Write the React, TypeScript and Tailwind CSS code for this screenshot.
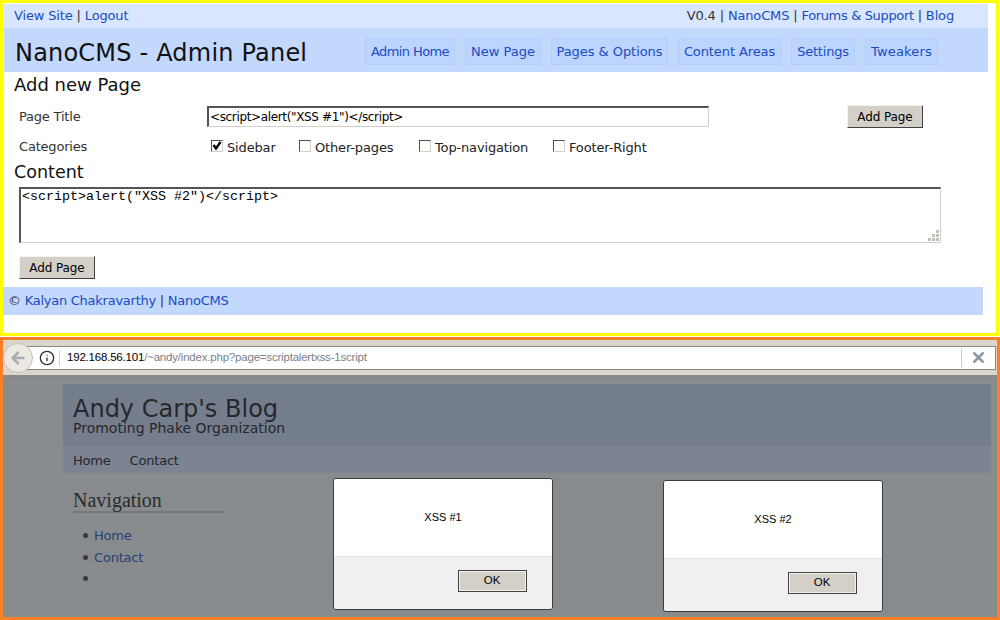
import { X, ArrowLeft, Info } from "lucide-react";

const verdana = "font-['DejaVu_Sans',sans-serif]";
const link = "text-[#1a4cc0]";

const NavItem = ({ label, className }: { label: string; className: string }) => (
	<a className={`flex h-[27px] items-center justify-center border border-[#b0cdff] bg-[#bcd4fe] pt-[1px] text-[13px] text-[#1a4cc0] ${className}`}>
		{label}
	</a>
);

const Classic = ({ className }: { className: string }) => (
	<button
		className={`flex items-center justify-center border border-t-[#f4f2ee] border-l-[#f4f2ee] border-r-[#404040] border-b-[#404040] bg-[#d4d0c8] text-[12px] tracking-[-0.1px] text-black ${className}`}
	>
		Add Page
	</button>
);

const Check = ({ label, checked, className }: { label: string; checked?: boolean; className: string }) => (
	<div className={`flex items-center gap-[4px] ${className}`}>
		<span className="-mt-[2px] flex h-[12px] w-[12px] items-center justify-center border border-t-[#505050] border-l-[#505050] border-r-[#d4d0c8] border-b-[#d4d0c8] bg-white">
			{checked && (
				<svg viewBox="0 0 10 10" className="h-[10px] w-[10px]">
					<path d="M1.5 4 L4 7.5 L8.5 1" fill="none" stroke="#000" strokeWidth="2.4" />
				</svg>
			)}
		</span>
		<span className="pt-[2px] text-[13px] tracking-[-0.15px] text-[#222]">{label}</span>
	</div>
);

const Alert = ({ text, className }: { text: string; className: string }) => (
	<div className={`absolute flex h-[132px] w-[220px] flex-col overflow-hidden rounded-[3px] border border-[#3c3c3c] ${className}`}>
		<div className="flex h-[78px] items-center justify-center border-b border-[#e4e4e4] bg-white font-['Liberation_Sans',sans-serif] text-[11px] text-black">
			{text}
		</div>
		<div className="flex flex-1 items-start justify-end bg-[#f0f0f0] pt-[13px] pr-[25px]">
			<button className="flex h-[22px] w-[69px] items-center justify-center border border-[#404040] border-r-[2px] border-b-[2px] bg-[#d4d0c8] font-['Liberation_Sans',sans-serif] text-[11.5px] text-black outline outline-1 -outline-offset-2 outline-[#f4f2ee]">
				OK
			</button>
		</div>
	</div>
);

const Bullet = ({ children }: { children?: string }) => (
	<li className="flex h-[21.5px] items-center gap-[6px]">
		<span className="h-[5px] w-[5px] rounded-full bg-[#3a3a3a]" />
		<span className="text-[#2b4078]">{children}</span>
	</li>
);

export default function App() {
	return (
		<div className={`flex h-[620px] w-[1000px] flex-col bg-white ${verdana}`}>
			<section className="h-[336px] w-[999px] border-[3px] border-[#ffff00] bg-white pt-[1px]">
				<div className="ml-[1px] flex h-[24px] w-[984px] items-center justify-between bg-[#d8e6ff] pr-[34px] pl-[10px] text-[13px] tracking-[-0.15px] text-[#333]">
					<div>
						<a className={link}>View Site</a> | <a className={link}>Logout</a>
					</div>
					<div>
						V0.4 | <a className={link}>NanoCMS</a> | <a className={`${link} tracking-[-0.35px]`}>Forums &amp; Support</a> |{" "}
						<a className={link}>Blog</a>
					</div>
				</div>
				<div className="ml-[1px] flex h-[44px] w-[984px] items-center bg-[#c3d8fd] pt-[3px] pl-[11px]">
					<h1 className="w-[350px] pt-[2px] text-[24px] tracking-[0.2px] text-[#111]">NanoCMS - Admin Panel</h1>
					<nav className="flex gap-[10px]">
						<NavItem label="Admin Home" className="w-[90px] tracking-[-0.6px]" />
						<NavItem label="New Page" className="w-[76px] tracking-[0px]" />
						<NavItem label="Pages & Options" className="w-[117px] tracking-[-0.05px]" />
						<NavItem label="Content Areas" className="w-[103px] tracking-[-0.1px]" />
						<NavItem label="Settings" className="w-[64px] tracking-[-0.2px]" />
						<NavItem label="Tweakers" className="w-[73px] tracking-[0.15px]" />
					</nav>
				</div>
				<h2 className="ml-[11px] h-[28px] pt-[1px] text-[18px] leading-[24px] text-[#111]">Add new Page</h2>
				<div className="flex h-[33px] items-center text-[13px] tracking-[-0.2px] text-[#333]">
					<span className="ml-[16px] w-[188px]">Page Title</span>
					<input
						readOnly
						value={'<script>alert("XSS #1")</script>'}
						className="h-[21px] w-[502px] border border-t-[2px] border-l-[2px] border-t-[#555] border-l-[#555] border-r-[#d4d0c8] border-b-[#d4d0c8] bg-white px-[1px] text-[12px] tracking-[-0.35px] text-black"
					/>
					<Classic className="ml-[138px] h-[23px] w-[76px]" />
				</div>
				<div className="flex h-[27px] items-center text-[13px] tracking-[-0.2px] text-[#333]">
					<span className="ml-[16px] w-[192px]">Categories</span>
					<Check label="Sidebar" checked className="w-[88px]" />
					<Check label="Other-pages" className="w-[120px]" />
					<Check label="Top-navigation" className="w-[134px]" />
					<Check label="Footer-Right" className="w-[110px]" />
				</div>
				<h2 className="ml-[11px] h-[27px] text-[17.5px] leading-[24px] text-[#111]">Content</h2>
				<div className="relative ml-[16px] h-[56px] w-[922px]">
					<textarea
						readOnly
						value={'<script>alert("XSS #2")</script>'}
						className="block h-full w-full resize-none border border-t-[2px] border-l-[2px] border-t-[#555] border-l-[#555] border-r-[#d4d0c8] border-b-[#d4d0c8] bg-white px-[1px] pt-[1px] font-['Liberation_Mono',monospace] text-[13.33px] leading-[14px] text-black"
					/>
					<svg viewBox="0 0 11 11" className="absolute right-[2px] bottom-[2px] h-[11px] w-[11px]">
						<path d="M8 0h3v3H8zM4 4h3v3H4zM8 4h3v3H8zM0 8h3v3H0zM4 8h3v3H4zM8 8h3v3H8z" fill="#c4c1ba" />
					</svg>
				</div>
				<Classic className="mt-[13px] ml-[16px] h-[23px] w-[76px]" />
				<div className="mt-[8px] h-[28px] w-[980px] bg-[#c3d8fd] pl-[5px] text-[13px] leading-[28px] tracking-[-0.25px] text-[#333]">
					© <a className={link}>Kalyan Chakravarthy</a> | <a className={link}>NanoCMS</a>
				</div>
			</section>
			<section className="relative mt-[1px] flex flex-1 flex-col border-[3px] border-[#ff7f27] bg-[#8b8e90]">
				<div className="flex h-[37px] items-center border-b-[2px] border-[#8a8880] bg-[#dad6ce] pr-[1px]">
					<div className="z-10 -mr-[16px] flex h-[30px] w-[30px] shrink-0 items-center justify-center rounded-full border border-[#c4c2bc] bg-[#ece9e3]">
						<ArrowLeft size={18} strokeWidth={3.5} className="text-[#a9adb2]" />
					</div>
					<div className="flex h-[24px] flex-1 items-center border border-[#888] bg-white pl-[21px] font-['Liberation_Sans',sans-serif] text-[11.5px] tracking-[-0.2px]">
						<Info size={16} className="mr-[4px] shrink-0 text-[#333]" />
						<span className="mr-[7px] h-[16px] w-px bg-[#d4d0c8]" />
						<span className="text-black">192.168.56.101</span>
						<span className="text-[#7a7f88]">/~andy/index.php?page=scriptalertxss-1script</span>
						<span className="mr-[8px] ml-auto h-[20px] w-px bg-[#d4d0c8]" />
						<X size={17} strokeWidth={3.5} className="mr-[8px] text-[#8a98a8]" />
					</div>
				</div>
				<div className="ml-[60px] flex w-[928px] flex-col">
					<div className="mt-[7px] h-[62px] bg-[#77808f] pt-[13px] pl-[10px] text-[#26282c]">
						<div className="text-[24px] leading-[24px]">Andy Carp's Blog</div>
						<div className="text-[14px] leading-[14px]">Promoting Phake Organization</div>
					</div>
					<div className="flex h-[27px] items-center gap-[19px] bg-[#7e8694] pt-[2px] pl-[10px] text-[13px] tracking-[-0.2px] text-[#26282c]">
						<span>Home</span>
						<span>Contact</span>
					</div>
					<div className="mt-[15px] ml-[10px] w-[152px]">
						<h3 className="h-[25px] border-b-[2px] border-[#777a7c] font-['Liberation_Serif',serif] text-[20px] leading-[25px] text-[#2a2c2e]">
							Navigation
						</h3>
						<ul className="mt-[12px] ml-[10px] text-[13px] tracking-[-0.2px]">
							<Bullet>Home</Bullet>
							<Bullet>Contact</Bullet>
							<Bullet />
						</ul>
					</div>
				</div>
				{/* modal dither over the page */}
				<div className="absolute top-[37px] right-0 bottom-0 left-0 bg-[repeating-conic-gradient(#00000009_0_25%,#0000_0_50%)] bg-[length:4px_4px]" />
				<Alert text="XSS #1" className="top-[138px] left-[330px]" />
				<Alert text="XSS #2" className="top-[140px] left-[660px]" />
			</section>
		</div>
	);
}
